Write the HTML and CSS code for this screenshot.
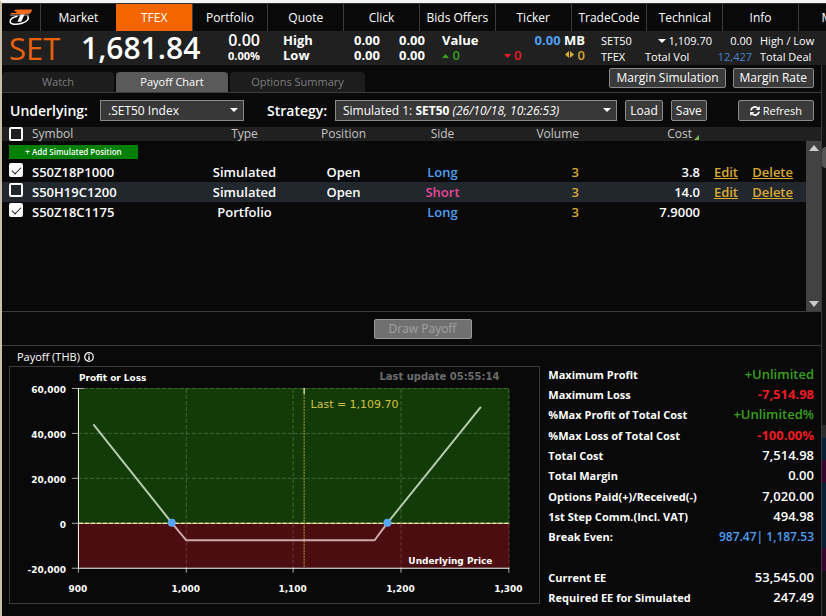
FILE: index.html
```html
<!DOCTYPE html>
<html lang="en">
<head>
<meta charset="utf-8">
<title>TFEX Payoff Chart</title>
<link rel="stylesheet" href="styles.css">
</head>
<body>
<nav class="nav">
  <a class="logo" href="#" aria-label="Home">
    <svg width="24" height="18" viewBox="0 0 24 18">
      <path d="M5 1.500Q6 .5 8 .5H23Q22.500 5 18.500 5.200H1.500Q2 3.300 5 4H8Z" fill="#f26a1b"/>
      <path d="M11.500 5.500 8.500 12.800H12.200L15.500 5.500Z" fill="#fff"/>
      <path d="M8.500 7.200C3.500 8 .8 10.500 1.200 12.800 1.700 15.800 8 15.800 13 14.200 18.500 12.500 20.800 9.300 18.500 7.300" fill="none" stroke="#fff" stroke-width="1.500"/>
      <path d="M1.200 6.200H20" stroke="#ddd" stroke-width=".7"/>
    </svg>
  </a>
  <a href="#">Market</a>
  <a href="#" class="active">TFEX</a>
  <a href="#">Portfolio</a>
  <a href="#">Quote</a>
  <a href="#">Click</a>
  <a href="#">Bids Offers</a>
  <a href="#">Ticker</a>
  <a href="#">TradeCode</a>
  <a href="#">Technical</a>
  <a href="#">Info</a>
  <a href="#">More</a>
</nav>

<header class="ticker">
  <div class="index-name">SET</div>
  <div class="index-value">1,681.84</div>
  <div class="pair change"><span class="big">0.00</span><span class="small">0.00%</span></div>
  <div class="pair bold"><span>High</span><span>Low</span></div>
  <div class="pair bold end"><span>0.00</span><span>0.00</span></div>
  <div class="pair bold end"><span>0.00</span><span>0.00</span></div>
  <div class="market">
    <div class="market-row bold"><span>Value</span><span><span class="blue">0.00</span> MB</span></div>
    <div class="market-row">
      <span class="green"><svg width="7" height="4"><path d="M0 4 3.500 0 7 4Z" fill="currentColor"/></svg> 0</span>
      <span class="red"><svg width="7" height="4"><path d="M0 0 3.500 4 7 0Z" fill="currentColor"/></svg> 0</span>
      <span class="gold"><svg width="9" height="7"><path d="M4 0V7L0 3.500ZM5 0V7L9 3.500Z" fill="currentColor"/></svg> 0</span>
    </div>
  </div>
  <div class="futures">
    <span>SET50</span><span class="right"><svg width="8" height="4"><path d="M0 0 4 4 8 0Z" fill="currentColor"/></svg> 1,109.70</span><span class="right">0.00</span><span>High / Low</span>
    <span>TFEX</span><span>Total Vol</span><span class="right blue-dim">12,427</span><span>Total Deal</span>
  </div>
</header>

<div class="body">
<main>
  <div class="tabbar">
    <a class="tab" href="#">Watch</a>
    <a class="tab current" href="#">Payoff Chart</a>
    <a class="tab wide" href="#">Options Summary</a>
    <div class="tab-actions">
      <button>Margin Simulation</button>
      <button>Margin Rate</button>
    </div>
  </div>

  <form class="filters">
    <label for="underlying">Underlying:</label>
    <div class="select underlying">
      <select id="underlying"><option>.SET50 Index</option></select>
      <svg width="8" height="4"><path d="M0 0 4 4 8 0Z" fill="#fff"/></svg>
    </div>
    <label for="strategy">Strategy:</label>
    <div class="select strategy">
      <select id="strategy"><option>Simulated 1: SET50 (26/10/18, 10:26:53)</option></select>
      <span class="select-text" aria-hidden="true">Simulated 1: <b>SET50</b> <i>(26/10/18, 10:26:53)</i></span>
      <svg width="8" height="4"><path d="M0 0 4 4 8 0Z" fill="#fff"/></svg>
    </div>
    <button type="button">Load</button>
    <button type="button" class="save">Save</button>
    <button type="button" class="refresh">
      <svg width="10" height="10" viewBox="0 0 10 10"><path d="M.9 4.300A4 4 0 0 1 7.800 2.200M9.100 5.700A4 4 0 0 1 2.200 7.800" fill="none" stroke="#fff" stroke-width="1.700"/><path d="M9.800 0V4H5.800ZM.2 10V6H4.200Z" fill="#fff"/></svg>
      Refresh</button>
  </form>

  <section class="positions">
    <table>
      <colgroup><col class="c-check"><col class="c-symbol"><col class="c-type"><col class="c-position"><col class="c-side"><col class="c-volume"><col class="c-cost"><col class="c-edit"><col class="c-delete"></colgroup>
      <thead>
        <tr><th><input type="checkbox" aria-label="Select all"></th><th class="left">Symbol</th><th>Type</th><th>Position</th><th>Side</th><th class="end">Volume</th><th class="end cost">Cost<svg width="5" height="5"><path d="M5 0V5H0Z" fill="#7ab648"/></svg></th><th></th><th></th></tr>
      </thead>
      <tbody>
        <tr class="add-row"><td colspan="9"><button class="add">+ Add Simulated Position</button></td></tr>
        <tr><td><input type="checkbox" aria-label="S50Z18P1000" checked></td><td class="left">S50Z18P1000</td><td>Simulated</td><td>Open</td><td class="long">Long</td><td class="end gold">3</td><td class="end">3.8</td><td class="end"><a href="#">Edit</a></td><td class="delete"><a href="#">Delete</a></td></tr>
        <tr class="alt"><td><input type="checkbox" aria-label="S50H19C1200"></td><td class="left">S50H19C1200</td><td>Simulated</td><td>Open</td><td class="short">Short</td><td class="end gold">3</td><td class="end">14.0</td><td class="end"><a href="#">Edit</a></td><td class="delete"><a href="#">Delete</a></td></tr>
        <tr><td><input type="checkbox" aria-label="S50Z18C1175" checked></td><td class="left">S50Z18C1175</td><td>Portfolio</td><td></td><td class="long">Long</td><td class="end gold">3</td><td class="end">7.9000</td><td></td><td></td></tr>
      </tbody>
    </table>
    <div class="scroll-column">
      <div class="scroll-track">
        <svg width="10" height="6"><path d="M0 6 5 0 10 6Z" fill="#ccc"/></svg>
        <svg width="10" height="6"><path d="M0 0 5 6 10 0Z" fill="#ccc"/></svg>
      </div>
    </div>
  </section>

  <div class="draw"><button disabled>Draw Payoff</button></div>

  <section class="payoff">
    <div class="chart-column">
      <h2>Payoff (THB) <svg width="10" height="10" viewBox="0 0 10 10"><circle cx="5" cy="5" r="4.300" fill="none" stroke="#fff" stroke-width="1.200"/><path d="M5 2V3.300M5 4.200V8" stroke="#fff" stroke-width="1.400"/></svg></h2>
      <div class="chart">
        <svg viewBox="10 367 530 236">
          <rect x="78" y="388" width="432" height="136" fill="#133b08"/>
          <rect x="78" y="524" width="432" height="44" fill="#4b0d10"/>
          <g class="grid">
            <path d="M78 388.500H510M78 433.500H510M78 478.500H510"/>
            <path d="M186.500 389V523M293.500 389V523M401.500 389V523M509.500 389V523"/>
            <path class="grid-red" d="M186.500 524V568M293.500 524V568M401.500 524V568M509.500 524V568"/>
          </g>
          <path class="tick" d="M72 388.500H84M72 433.500H79M72 478.500H79M72 523.500H79M72 568.500H79M78.500 568V573M186.500 568V573M293.500 568V573M401.500 568V573M509.500 568V573"/>
          <path d="M78.500 388V568.500H510" fill="none" stroke="#fff"/>
          <path d="M79 523.500H510" stroke="#d8c33a"/>
          <path d="M79 523.500H510" stroke="#fff" stroke-dasharray="4 2"/>
          <path d="M304.500 388V568" stroke="#b5a62c" stroke-dasharray="2 1"/>
          <path d="M304.500 388V394" stroke="#fff"/>
          <path d="M93.500 424.500 172 523" class="line-profit"/>
          <path d="M388 523 481.500 407" class="line-profit"/>
          <path d="M172 523 186.500 540.500H375L388 523" class="line-loss"/>
          <circle cx="172" cy="523" r="4" fill="#58a6f5"/>
          <circle cx="388" cy="523" r="4" fill="#58a6f5"/>
          <g class="label">
            <text x="79" y="381">Profit or Loss</text>
            <text x="493" y="564" text-anchor="end">Underlying Price</text>
            <g text-anchor="end">
              <text x="66" y="393">60,000</text><text x="66" y="438">40,000</text><text x="66" y="483">20,000</text><text x="66" y="528">0</text><text x="66" y="573">-20,000</text>
            </g>
            <g text-anchor="middle">
              <text x="78" y="592">900</text><text x="186" y="592">1,000</text><text x="293" y="592">1,100</text><text x="401" y="592">1,200</text><text x="509" y="592">1,300</text>
            </g>
          </g>
          <text class="updated" x="500" y="380" text-anchor="end">Last update 05:55:14</text>
          <text class="last" x="311" y="408">Last = 1,109.70</text>
        </svg>
      </div>
    </div>
    <dl class="stats">
      <div><dt>Maximum Profit</dt><dd class="green">+Unlimited</dd></div>
      <div><dt>Maximum Loss</dt><dd class="red">-7,514.98</dd></div>
      <div><dt>%Max Profit of Total Cost</dt><dd class="green">+Unlimited%</dd></div>
      <div><dt>%Max Loss of Total Cost</dt><dd class="red">-100.00%</dd></div>
      <div><dt>Total Cost</dt><dd>7,514.98</dd></div>
      <div><dt>Total Margin</dt><dd>0.00</dd></div>
      <div><dt>Options Paid(+)/Received(-)</dt><dd>7,020.00</dd></div>
      <div><dt>1st Step Comm.(Incl. VAT)</dt><dd>494.98</dd></div>
      <div class="break-even"><dt>Break Even:</dt><dd class="blue">987.47| 1,187.53</dd></div>
      <div class="equity"><dt>Current EE</dt><dd>53,545.00</dd></div>
      <div><dt>Required EE for Simulated</dt><dd>247.49</dd></div>
    </dl>
  </section>
</main>
<div class="edge"><div class="edge-thumb"></div></div>
</div>
</body>
</html>
```
FILE: styles.css
```css
* { box-sizing: border-box; }

body {
  margin: 0;
  min-height: 100vh;
  display: flex;
  flex-direction: column;
  border-left: 2px solid #c9c0ab;
  border-top: 3px solid #f4f4f4;
  background: #090909;
  color: #fff;
  font: 13px/15px "Open Sans", "Noto Sans", sans-serif;
}

a { color: inherit; text-decoration: none; }
button, select { font: inherit; color: inherit; }
svg { flex: none; }

.bold { font-weight: 700; }
.blue { color: #4f9ef0; }
.blue-dim { color: #4785cc; }
.green { color: #38a01c; }
.red { color: #ec1c24; }
.gold { color: #d9ab35; }
.right { text-align: right; }

.nav {
  display: flex;
  height: 28px;
  overflow: hidden;
  border-top: 1px solid #333;
  font-size: 12px;
}
.nav a {
  flex: none;
  width: 9.2%;
  border-left: 1px solid #3c3c3c;
  line-height: 28px;
  text-align: center;
  white-space: nowrap;
}
.nav .logo {
  width: 38px;
  border: 0;
  display: flex;
  align-items: center;
  justify-content: center;
}
.nav .active { background: #f26500; border-color: #f26500; }

.ticker {
  display: flex;
  height: 34px;
  padding-left: 7px;
  background: #202020;
  white-space: nowrap;
}
.index-name { width: 72px; font-size: 31px; line-height: 34px; color: #e8610c; }
.index-value { width: 120px; font-size: 30px; line-height: 34px; font-weight: 600; }
.pair { display: flex; flex-direction: column; padding-top: 2px; width: 45px; }
.pair.end { align-items: flex-end; }
.pair.bold:not(.end) { width: 52px; margin-left: 23px; }
.pair.change { flex: 1; align-items: flex-end; font-weight: 600; }
.change .big { font-size: 16px; }
.change .small { font-size: 11px; font-weight: 700; }
.market { width: 143px; margin-left: 17px; padding-top: 2px; }
.market-row { display: flex; justify-content: space-between; font-weight: 600; }
.market-row.bold { font-weight: 700; }
.market-row svg { vertical-align: 2px; }
.futures {
  width: 241px;
  padding: 2px 0 0 16px;
  display: grid;
  grid-template-columns: 44px 67px 40px 1fr;
  font-size: 11px;
}
.futures span:nth-child(4n) { padding-left: 8px; }
.futures svg { vertical-align: 2px; }

.body { display: flex; flex: 1; }
main { flex: 1; min-width: 0; display: flex; flex-direction: column; }
.edge {
  width: 5px;
  border-left: 1px solid #3a3a3a;
  background: linear-gradient(#111 0 360px, #2b2b2b 0 373px, #07203a 0 395px, #36062f 0 418px, #07203a 0 483px, #36062f 0 506px, #111 0);
  overflow: hidden;
}
.edge-thumb { width: 8px; height: 21px; margin-top: 82px; border-radius: 4px; background: #555; }

main button {
  padding: 0 6px;
  border: 1px solid #8a8a8a;
  border-radius: 2px;
  background: #3a3a3a;
  height: 20px;
  font-size: 12px;
  line-height: 18px;
  white-space: nowrap;
}

.tabbar {
  display: flex;
  align-items: flex-end;
  gap: 2px;
  height: 28px;
  border-bottom: 1px solid #3c3c3c;
}
.tab {
  width: 112px;
  height: 20px;
  line-height: 20px;
  border-radius: 4px 4px 0 0;
  background: #1d1d1d;
  color: #7d7d7d;
  font-size: 11px;
  text-align: center;
}
.tab.wide { width: 135px; }
.tab.current { background: #5a5a5a; color: #fff; }
.tab-actions { margin: 0 7px 4px auto; display: flex; gap: 7px; }

.filters { display: flex; align-items: center; height: 34px; padding: 1px 7px 0 8px; }
.filters label { font-size: 14px; font-weight: 600; line-height: 20px; }
.filters label[for="underlying"] { width: 90px; }
.filters label[for="strategy"] { width: 68px; }
.select { position: relative; height: 21px; }
.select select {
  width: 100%;
  height: 21px;
  padding: 0 7px;
  border: 1px solid #8a8a8a;
  border-radius: 0;
  appearance: none;
  background: #383838;
  font-size: 12px;
}
.select svg { position: absolute; right: 6px; top: 8px; pointer-events: none; }
.underlying { width: 144px; margin-right: 23px; }
.strategy { flex: 1; margin-right: 8px; }
.strategy select { color: transparent; }
.select-text { position: absolute; left: 8px; top: 3px; font-size: 12px; pointer-events: none; white-space: nowrap; }
.filters button { height: 21px; padding: 0 4px; }
.filters .save { margin-left: 8px; }
.filters .refresh { margin-left: 31px; padding: 0 11px; font-size: 11px; }
.refresh svg { vertical-align: -1px; }

.positions { display: flex; align-items: stretch; min-height: 185px; border-bottom: 1px solid #3c3c3c; }
table { flex: 1; align-self: flex-start; table-layout: fixed; border-collapse: collapse; width: 100%; }
.c-check { width: 28px; }
.c-type { width: 99px; }
.c-symbol { width: 165px; }
.c-position { width: 99px; }
.c-side { width: 99px; }
.c-volume { width: 87px; }
.c-cost { width: 121px; }
.c-edit { width: 38px; }
th, td { padding: 0; height: 20px; line-height: 20px; text-align: center; font-weight: 600; white-space: nowrap; }
th { height: 14px; line-height: 14px; font-weight: 400; font-size: 12px; color: #c4c4c4; background: #202020; }
td:first-child, th:first-child { padding-left: 7px; text-align: left; }
.left { text-align: left; padding-left: 2px; }
.end { text-align: right; }
th.cost svg { margin: 0 1px 0 2px; vertical-align: -2px; }
.add-row td { height: 21px; }
main .add { display: block; width: 129px; height: 14px; border: 0; border-radius: 0; background: #008000; font-size: 8px; line-height: 14px; }
.alt { background: #21272d; }
.long { color: #4f9ef0; }
.short { color: #e8489a; }
td a { color: #d9ab35; text-decoration: underline; }
td.delete { padding-right: 13px; text-align: right; }
input[type="checkbox"] {
  display: block;
  width: 14px;
  height: 14px;
  margin: 0;
  appearance: none;
  border: 2px solid #fff;
  border-radius: 2px;
}
td input[type="checkbox"] { margin-bottom: 4px; }
input[type="checkbox"]:checked { background: #fff; }
input[type="checkbox"]:checked::after {
  content: "";
  display: block;
  width: 8px;
  height: 4px;
  margin: 2px 0 0 1px;
  border: solid #222;
  border-width: 0 0 1px 1px;
  transform: rotate(-45deg);
}
.scroll-column { width: 15px; display: flex; padding-top: 14px; background: #202020; }
.scroll-track {
  flex: 1;
  padding: 4px 0;
  background: #424242;
  display: flex;
  flex-direction: column;
  align-items: center;
  justify-content: space-between;
}

.draw { display: flex; justify-content: center; align-items: center; height: 34px; padding-left: 22px; border-bottom: 1px solid #3c3c3c; }
.draw button { width: 98px; background: #707070; color: #a2a2a2; border-color: #999; }

.payoff { display: flex; align-items: flex-start; padding: 2px 7px 0; }
.chart-column { flex: 2; }
h2 { margin: 0; padding: 0 0 0 8px; font-size: 11px; line-height: 18px; font-weight: 400; }
h2 svg { margin-left: 1px; vertical-align: -1px; }
.chart { border: 1px solid #3c3c3c; }
.chart svg { display: block; width: 100%; }
.grid path { fill: none; stroke: #3f6637; stroke-dasharray: 4 2; }
.grid .grid-red { stroke: #6e3335; }
.tick { stroke: #aaa; }
.line-profit { fill: none; stroke: #b5ccae; stroke-width: 2; }
.line-loss { fill: none; stroke: #cfa9aa; stroke-width: 2; }
.label { font: 700 9px "DejaVu Sans", sans-serif; fill: #fff; }
.updated { font: 700 10px "DejaVu Sans", sans-serif; fill: #6c6c6c; }
.last { font: 11px "DejaVu Sans", sans-serif; fill: #d5c23c; }

.stats { flex: 1; height: 244px; margin: 16px 0 0 8px; display: grid; grid-template-rows: repeat(12, 1fr); font-weight: 600; }
.stats div { display: flex; justify-content: space-between; align-items: center; }
.stats .equity { grid-row: 11; }
.stats div:last-child { grid-row: 12; }
.stats dt { font-size: 11px; font-weight: 700; }
.stats dd { margin: 0; }
.stats dd.red { font-weight: 700; }
.stats .break-even dd { font-size: 12px; }
```
